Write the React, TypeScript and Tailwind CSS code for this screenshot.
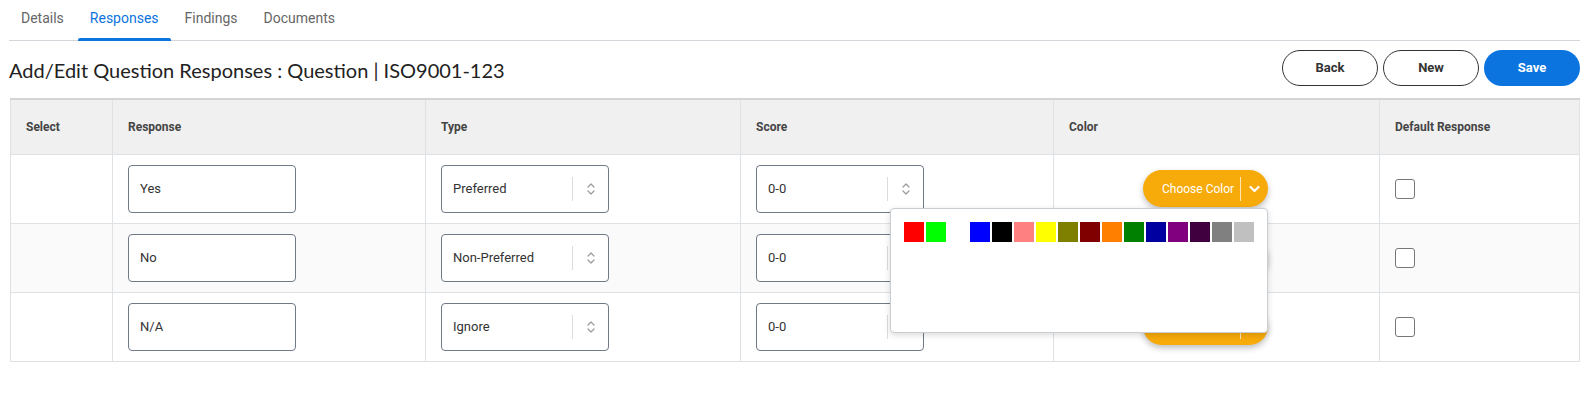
import React from 'react';

const tabs = ['Details', 'Responses', 'Findings', 'Documents'];

const swatches = [
  '#ff0000', '#00ff00', '#ffffff', '#0000ff', '#000000', '#ff8080', '#ffff00', '#808000',
  '#800000', '#ff8000', '#008000', '#0000a0', '#800080', '#400040', '#808080', '#c0c0c0',
];

const rows = [
  { response: 'Yes', type: 'Preferred', score: '0-0' },
  { response: 'No', type: 'Non-Preferred', score: '0-0' },
  { response: 'N/A', type: 'Ignore', score: '0-0' },
];

const UpDown = () => (
  <svg width="8" height="14" viewBox="0 0 8 14" fill="none" stroke="#9a9a9a" strokeWidth="1.2" strokeLinecap="round" strokeLinejoin="round">
    <path d="M1 5 L4 2 L7 5" />
    <path d="M1 9 L4 12 L7 9" />
  </svg>
);

const SelectBox = ({ value }: { value: string }) => (
  <div className="flex h-[48px] w-[168px] items-center rounded-[4px] border border-[#6f7a86] bg-white">
    <span className="flex-1 pl-[11px] text-[13px] text-[#333]">{value}</span>
    <span className="h-[24px] w-px bg-[#dcdcdc]" />
    <span className="flex w-[35px] items-center justify-center">
      <UpDown />
    </span>
  </div>
);

const ColorButton = ({ open }: { open?: boolean }) => (
  <div className="relative w-[125px]">
    <button className="flex h-[37px] w-[125px] items-center rounded-full bg-[#f7ab0a] pl-[19px] text-[12px] text-white shadow-[0_3px_6px_rgba(0,0,0,0.25)]">
      <span>Choose Color</span>
      <span className="ml-[6px] h-[24px] w-px bg-white/70" />
      <span className="flex flex-1 items-center justify-center">
        <svg width="11" height="8" viewBox="0 0 11 8" fill="none" stroke="white" strokeWidth="2.2" strokeLinecap="round" strokeLinejoin="round">
          <path d="M1.5 2 L5.5 6 L9.5 2" />
        </svg>
      </span>
    </button>
    {open && (
      <div className="absolute right-0 top-[38px] z-10 h-[125px] w-[378px] rounded-[4px] border border-[#c9ced3] bg-white p-[13px] shadow-[0_2px_6px_rgba(0,0,0,0.15)]">
        <div className="flex gap-[2px]">
          {swatches.map((c, i) => (
            <span key={i} className="h-[20px] w-[20px]" style={{ backgroundColor: c }} />
          ))}
        </div>
      </div>
    )}
  </div>
);

export default function App() {
  return (
    <div className="bg-white pl-[9px] pr-[16px] font-['Roboto',sans-serif]" style={{ width: 1596, height: 397 }}>
      <div className="flex h-[41px] gap-[2px] border-b border-[#d3d6da]">
        {tabs.map((t) => (
          <div
            key={t}
            className={`relative flex h-[40px] items-start px-[12px] pt-[8px] text-[14px] ${t === 'Responses' ? 'text-[#0b74de]' : 'text-[#666]'}`}
          >
            {t}
            {t === 'Responses' && <span className="absolute bottom-[-1px] left-0 right-0 h-[3px] rounded-t-[2px] bg-[#0b74de]" />}
          </div>
        ))}
      </div>

      <div className="flex items-start justify-between pt-[9px]">
        <h1 className="pt-[8px] font-['Lato',sans-serif] text-[20px] leading-[24px] text-[#222]">
          Add/Edit Question Responses : Question | ISO9001-123
        </h1>
        <div className="flex gap-[5px]">
          <button className="h-[36px] w-[96px] rounded-full border border-[#333] bg-white text-[13px] font-bold text-[#333]">Back</button>
          <button className="h-[36px] w-[96px] rounded-full border border-[#333] bg-white text-[13px] font-bold text-[#333]">New</button>
          <button className="h-[36px] w-[96px] rounded-full bg-[#0b74de] text-[13px] font-bold text-white">Save</button>
        </div>
      </div>

      <table className="ml-px mt-[12px] w-[1570px] table-fixed border-collapse border-t-2 border-[#d4d4d4]">
        <colgroup>
          <col className="w-[102px]" />
          <col className="w-[313px]" />
          <col className="w-[315px]" />
          <col className="w-[313px]" />
          <col className="w-[326px]" />
          <col />
        </colgroup>
        <thead>
          <tr className="h-[55px] bg-[#f0f0f0] text-left text-[12px] font-bold text-[#444]">
            {['Select', 'Response', 'Type', 'Score', 'Color', 'Default Response'].map((h) => (
              <th key={h} className="border border-t-0 border-[#dfe2e5] px-[15px] font-bold">
                {h}
              </th>
            ))}
          </tr>
        </thead>
        <tbody>
          {rows.map((r, i) => (
            <tr key={r.response} className={`h-[69px] ${i === 1 ? 'bg-[#fafafa]' : 'bg-white'}`}>
              <td className="border border-[#dfe2e5] px-[15px]" />
              <td className="border border-[#dfe2e5] px-[15px]">
                <div className="flex h-[48px] w-[168px] items-center rounded-[4px] border border-[#6f7a86] bg-white pl-[11px] text-[13px] text-[#333]">
                  {r.response}
                </div>
              </td>
              <td className="border border-[#dfe2e5] px-[15px]">
                <SelectBox value={r.type} />
              </td>
              <td className="border border-[#dfe2e5] px-[15px]">
                <SelectBox value={r.score} />
              </td>
              <td className="border border-[#dfe2e5] pl-[89px]">
                <ColorButton open={i === 0} />
              </td>
              <td className="border border-[#dfe2e5] px-[15px]">
                <span className="block h-[20px] w-[20px] rounded-[3px] border-[1.5px] border-[#777] bg-white" />
              </td>
            </tr>
          ))}
        </tbody>
      </table>
    </div>
  );
}
